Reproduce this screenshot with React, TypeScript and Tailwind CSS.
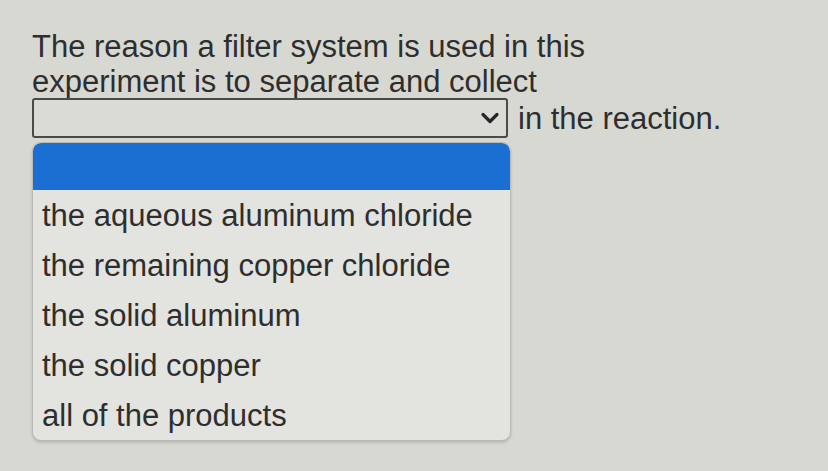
import { useState } from 'react';

const OPTIONS = [
  'the aqueous aluminum chloride',
  'the remaining copper chloride',
  'the solid aluminum',
  'the solid copper',
  'all of the products',
];

function Chevron() {
  return (
    <svg width="20" height="14" viewBox="0 0 20 14" aria-hidden="true">
      <path d="M3 3.5l7 7 7-7" fill="none" stroke="#262626" strokeWidth="3.2" strokeLinecap="round" strokeLinejoin="round" />
    </svg>
  );
}

export default function App() {
  const [selected, setSelected] = useState<string | null>(null);

  return (
    <div className="min-h-[471px] w-[828px] bg-[#d8d8d3] pl-[32px] pt-[29px] text-[31px] leading-[35px] text-[#2e2e2e] [font-family:'Liberation_Sans',Arial,sans-serif]">
      {/* Question prompt */}
      <p className="w-[600px]">
        The reason a filter system is used in this experiment is to separate and collect
      </p>

      {/* Blank with the open dropdown */}
      <div className="mt-[-1px] flex items-center gap-[10px]">
        <button
          type="button"
          className="flex h-[40px] w-[476px] items-center justify-end rounded-[3px] border-2 border-[#4a4a48] bg-[#dadad6] pr-[6px]"
          aria-haspopup="listbox"
        >
          <span className="flex-1 pl-2 text-left">{selected ?? ''}</span>
          <Chevron />
        </button>
        <span>in the reaction.</span>
      </div>

      {/* Options list */}
      <ul
        role="listbox"
        className="mt-[4px] w-[479px] overflow-hidden rounded-[9px] border border-[#b9b9b5] bg-[#e3e3df] shadow-[0_2px_3px_rgba(0,0,0,0.15)]"
      >
        <li className="h-[47px] rounded-t-[8px] bg-[#1b6fd3]" aria-selected="true" />
        {OPTIONS.map((option) => (
          <li
            key={option}
            role="option"
            onClick={() => setSelected(option)}
            className="flex h-[50px] items-center px-[9px]"
          >
            {option}
          </li>
        ))}
      </ul>
    </div>
  );
}
